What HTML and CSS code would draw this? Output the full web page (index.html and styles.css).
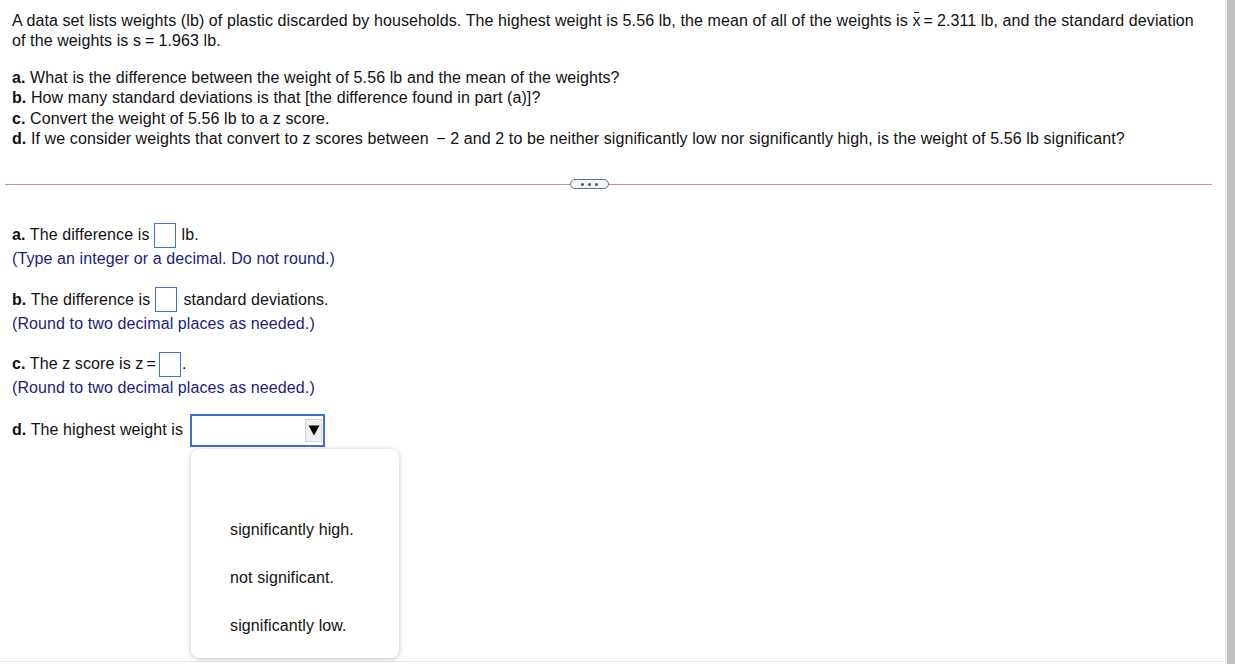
FILE: index.html
```html
<!DOCTYPE html>
<html>
<head>
<meta charset="utf-8">
<link rel="stylesheet" href="styles.css">
</head>
<body>
<div class="page">
  <main class="main">
    <div class="question">
      <p class="intro">A data set lists weights (lb) of plastic discarded by households. The highest weight is 5.56 lb, the mean of all of the weights is <span class="xbar">x</span><span class="eq">=</span>2.311 lb, and the standard deviation of the weights is s<span class="eq2">=</span>1.963 lb.</p>
      <ul class="parts">
        <li><b>a.</b> What is the difference between the weight of 5.56 lb and the mean of the weights?</li>
        <li><b>b.</b> How many standard deviations is that [the difference found in part (a)]?</li>
        <li><b>c.</b> Convert the weight of 5.56 lb to a z score.</li>
        <li><b>d.</b> If we consider weights that convert to z scores between <span class="minus">&minus; 2</span> and 2 to be neither significantly low nor significantly high, is the weight of 5.56 lb significant?</li>
      </ul>
    </div>
    <div class="divider">
      <span class="pill"><i></i><i></i><i></i></span>
    </div>
    <div class="answers">
      <div class="block">
        <div class="row"><span><b>a.</b> The difference is</span><span class="box box-a"></span><span>lb.</span></div>
        <div class="hint">(Type an integer or a decimal. Do not round.)</div>
      </div>
      <div class="block">
        <div class="row"><span><b>b.</b> The difference is</span><span class="box box-b"></span><span>standard deviations.</span></div>
        <div class="hint">(Round to two decimal places as needed.)</div>
      </div>
      <div class="block">
        <div class="row"><span><b>c.</b> The z score is z</span><span class="eq3">=</span><span class="box box-c"></span><span>.</span></div>
        <div class="hint">(Round to two decimal places as needed.)</div>
      </div>
      <div class="block">
        <div class="row row-d"><span><b>d.</b> The highest weight is</span>
          <div class="select-wrap">
            <div class="select">
              <span class="arrow"><svg width="12" height="12" viewBox="0 0 12 12"><path d="M0.5 1.5 H11.5 L6 11.5 Z" fill="#000"/></svg></span>
            </div>
            <div class="menu">
              <div class="opt"></div>
              <div class="opt">significantly high.</div>
              <div class="opt">not significant.</div>
              <div class="opt">significantly low.</div>
            </div>
          </div>
        </div>
      </div>
    </div>
  </main>
  <div class="scrollbar"></div>
</div>
</body>
</html>
```

FILE: styles.css
```css
html, body {
  margin: 0;
  padding: 0;
  background: #ffffff;
}
body {
  font-family: "Liberation Sans", Arial, sans-serif;
  font-size: 16px;
  letter-spacing: 0.1px;
  color: #111111;
}
.page {
  display: flex;
  width: 1235px;
  height: 664px;
  overflow: hidden;
}
.main {
  flex: 1;
  padding: 11px 13px 0 5px;
  border-bottom: 1px solid #e6e6e6;
  box-sizing: border-box;
  height: 662px;
}
.scrollbar {
  width: 8px;
  background: #c1c1c1;
  border-left: 2px solid #efefef;
}
.question {
  padding: 0 10px 0 7px;
}
.intro {
  margin: 0;
  line-height: 20px;
}
.xbar {
  position: relative;
  display: inline-block;
}
.xbar::before {
  content: "";
  position: absolute;
  left: 2px;
  right: 2px;
  top: 1px;
  height: 1px;
  background: #111;
}
.eq { margin: 0 4px 0 3px; }
.eq2 { margin: 0 4px; }
.eq3 { margin: 0 3px; }
.parts {
  list-style: none;
  margin: 17px 0 0 0;
  padding: 0;
}
.parts li {
  line-height: 20.3px;
}
.minus {
  margin-left: 3px;
}
.divider {
  position: relative;
  margin-top: 35px;
  height: 1px;
  background: #c48fa4;
}
.pill {
  position: absolute;
  left: 565px;
  top: -5px;
  width: 37px;
  height: 8px;
  border: 1.5px solid #6b7280;
  border-radius: 6px;
  background: #f3f4f6;
  display: flex;
  align-items: center;
  justify-content: center;
  gap: 4px;
}
.pill i {
  width: 3px;
  height: 3px;
  border-radius: 50%;
  background: #4b5563;
}
.answers {
  padding: 37px 0 0 7px;
}
.block {
  margin-bottom: 17.5px;
}
.row {
  height: 26px;
  display: flex;
  align-items: center;
}
.box {
  display: block;
  width: 20px;
  height: 23px;
  border: 1px solid #3e74d6;
  margin: 0 6px 0 4px;
}
.box-b { margin-left: 5px; }
.box-c { margin: 0 1px 0 0; }
.hint {
  line-height: 20px;
  color: #1d1d7c;
  margin-top: 1px;
}
.row-d {
  height: 33px;
  margin-top: -2px;
}
.select-wrap {
  position: relative;
  margin-left: 7px;
}
.select {
  width: 131px;
  height: 29px;
  border: 2px solid #3a6fd8;
  background: #fff;
  position: relative;
}
.arrow {
  position: absolute;
  right: 1px;
  top: 3px;
  width: 17px;
  height: 23px;
  background: #f0f0f0;
  border: 1px solid #d4d4d4;
  box-sizing: border-box;
  display: flex;
  align-items: center;
  justify-content: center;
}
.menu {
  position: absolute;
  left: 1px;
  top: 35px;
  width: 208px;
  box-sizing: border-box;
  padding: 9px 0 8px 0;
  background: #fff;
  border-radius: 8px;
  box-shadow: 0 1px 5px rgba(0, 0, 0, 0.25);
  z-index: 2;
}
.opt {
  height: 48px;
  line-height: 48px;
  padding-left: 39px;
  color: #111;
}
```
